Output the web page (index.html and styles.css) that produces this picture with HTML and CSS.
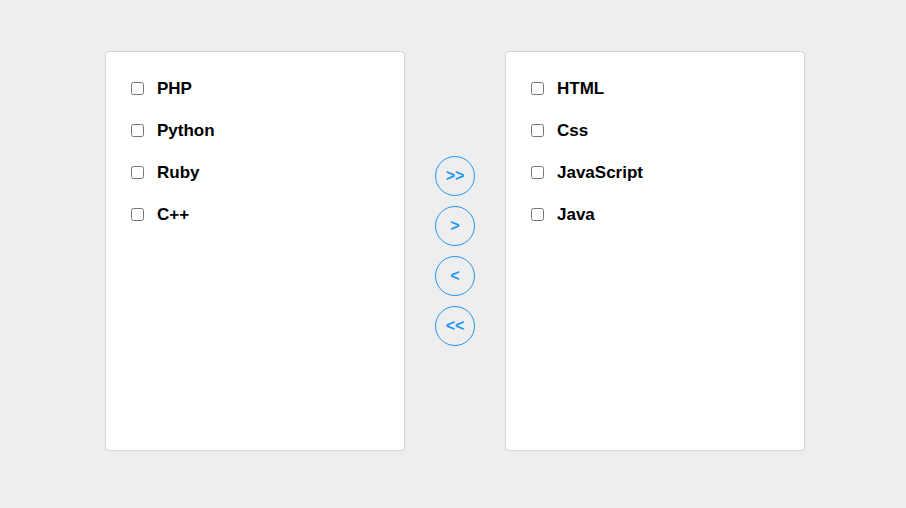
FILE: index.html
```html
<!DOCTYPE html>
<html>
<head>
<meta charset="utf-8">
<link rel="stylesheet" href="styles.css">
</head>
<body>
<div class="transfer">
  <div class="panel">
    <label class="item"><input type="checkbox"><span>PHP</span></label>
    <label class="item"><input type="checkbox"><span>Python</span></label>
    <label class="item"><input type="checkbox"><span>Ruby</span></label>
    <label class="item"><input type="checkbox"><span>C++</span></label>
  </div>
  <div class="actions">
    <button class="btn">&gt;&gt;</button>
    <button class="btn">&gt;</button>
    <button class="btn">&lt;</button>
    <button class="btn">&lt;&lt;</button>
  </div>
  <div class="panel">
    <label class="item"><input type="checkbox"><span>HTML</span></label>
    <label class="item"><input type="checkbox"><span>Css</span></label>
    <label class="item"><input type="checkbox"><span>JavaScript</span></label>
    <label class="item"><input type="checkbox"><span>Java</span></label>
  </div>
</div>
</body>
</html>
```
FILE: styles.css
```css
html, body {
  margin: 0;
  padding: 0;
  background: #eeeeee;
  font-family: "Liberation Sans", Arial, sans-serif;
}
.transfer {
  display: flex;
  padding: 51px 0 0 105px;
}
.panel {
  box-sizing: border-box;
  width: 300px;
  height: 400px;
  background: #fff;
  border: 1px solid #d6d6d6;
  border-radius: 4px;
  box-shadow: 0 1px 2px rgba(0,0,0,0.06);
  padding: 16px 0 0 25px;
  display: flex;
  flex-direction: column;
}
.item {
  display: flex;
  align-items: center;
  height: 42px;
  font-size: 17px;
  font-weight: bold;
  color: #000;
}
.item input {
  margin: 0 13px 2px 0;
  width: 13px;
  height: 13px;
}
.actions {
  width: 100px;
  display: flex;
  flex-direction: column;
  align-items: center;
  justify-content: center;
  gap: 10px;
}
.btn {
  width: 40px;
  height: 40px;
  border-radius: 50%;
  border: 1px solid #2196f3;
  background: transparent;
  color: #2196f3;
  font-family: "Liberation Sans", Arial, sans-serif;
  font-weight: bold;
  font-size: 16px;
  padding: 0;
}
```
